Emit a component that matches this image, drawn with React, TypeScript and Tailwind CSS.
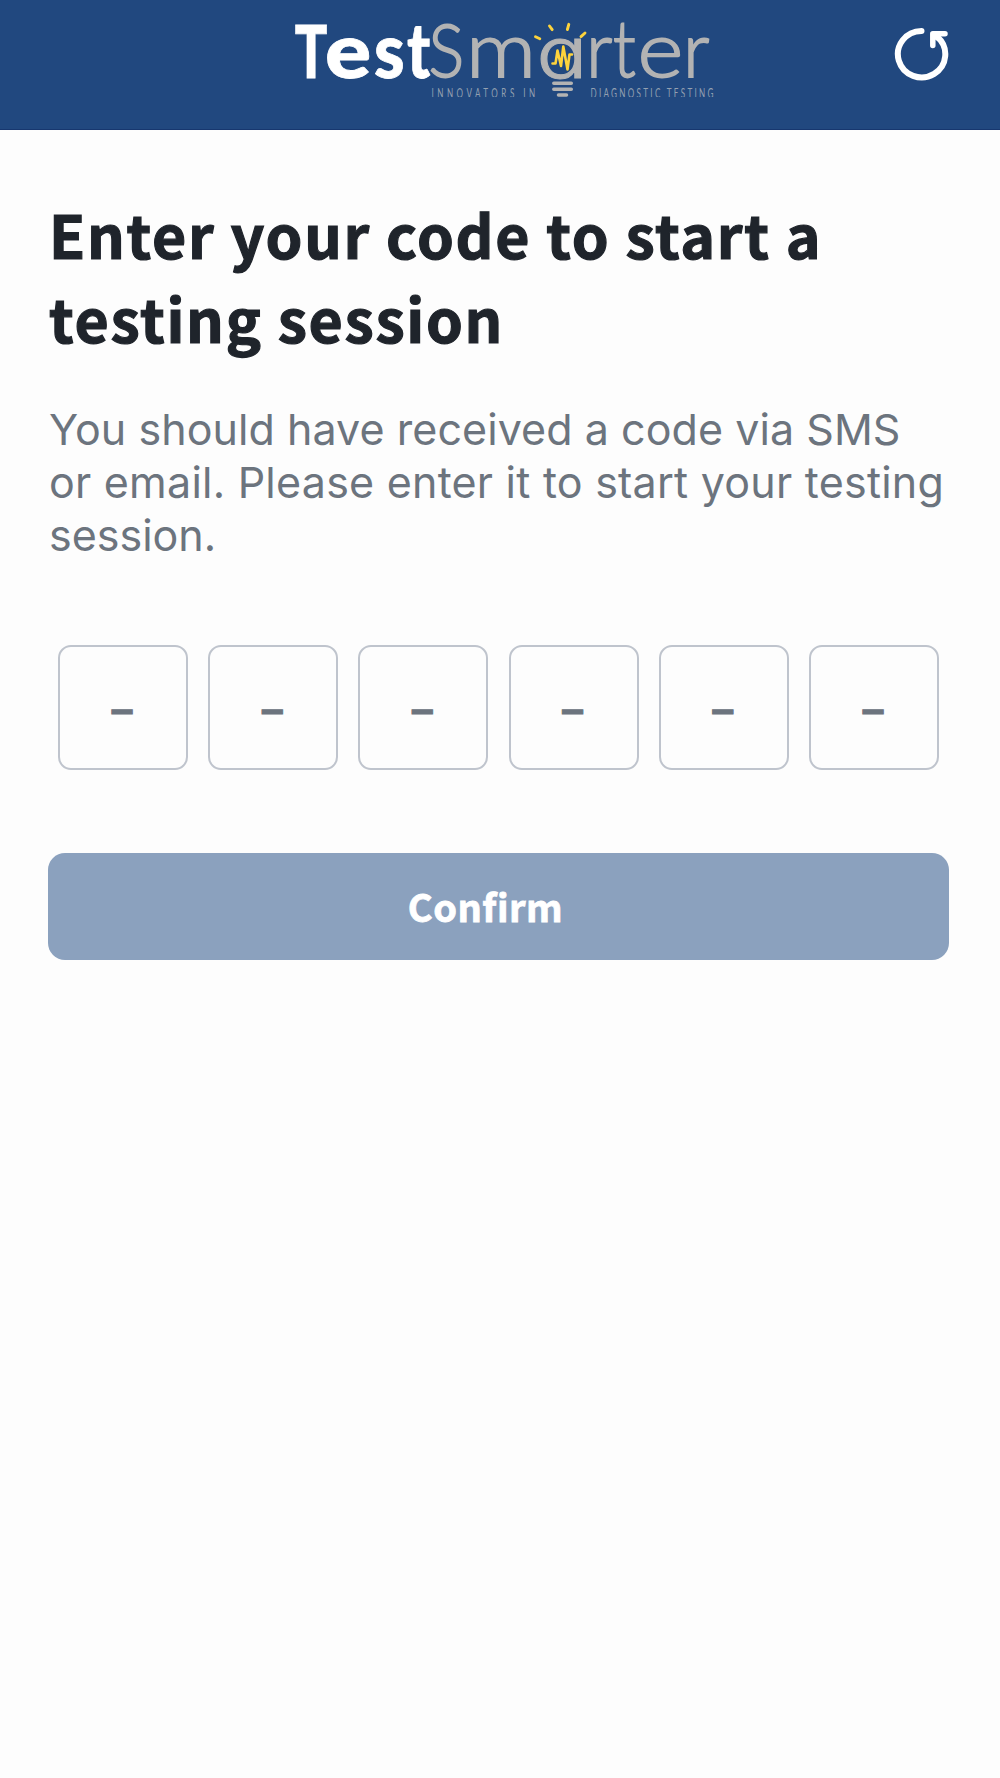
import {useState} from 'react';

const CODE_LENGTH = 6;

const boldLetters = [
  {char: 'T', x: 294.8, scale: 0.74, size: 73},
  {char: 'e', x: 325, scale: 1.12, size: 77},
  {char: 's', x: 374, scale: 0.9, size: 77},
  {char: 't', x: 407, scale: 0.8, size: 77},
];

const lightLetters = [
  {char: 'S', x: 428.5, scale: 0.92, size: 72.5},
  {char: 'm', x: 466, scale: 1.13, size: 77},
  {char: 'r', x: 586, scale: 0.97, size: 77},
  {char: 't', x: 613, scale: 0.85, size: 78},
  {char: 'e', x: 637.5, scale: 1.14, size: 77},
  {char: 'r', x: 683, scale: 0.97, size: 77},
];

function Logo() {
  return (
    <svg
      viewBox="290 0 430 96.5"
      className="h-[96.5px] w-[430px] overflow-hidden"
      role="img"
      aria-label="TestSmarter"
    >
      {/* Word mark */}
      <g fill="#ffffff" stroke="#ffffff" strokeWidth="0.8" fontWeight="900" className="font-['Lato',sans-serif]">
        {boldLetters.map(({char, x, scale, size}) => (
          <text key={x} transform={`translate(${x} 77.5) scale(${scale} 1)`} fontSize={size}>
            {char}
          </text>
        ))}
      </g>
      <g fill="#b3b3b3" stroke="#b3b3b3" strokeWidth="1.8" fontWeight="300" className="font-['Lato',sans-serif]">
        {lightLetters.map(({char, x, scale, size}) => (
          <text key={x} transform={`translate(${x} 77) scale(${scale} 1)`} fontSize={size}>
            {char}
          </text>
        ))}
      </g>
      <text
        x="536.5"
        y="77.5"
        fill="#b3b3b3"
        stroke="#b3b3b3"
        strokeWidth="1"
        fontSize="71"
        fontWeight="300"
        textLength="51"
        lengthAdjust="spacingAndGlyphs"
        className="font-['Inter',sans-serif] [font-feature-settings:'cv11']"
      >
        a
      </text>

      {/* Light bulb */}
      <g fill="none" stroke="#fdd33c" strokeLinecap="round" strokeLinejoin="round">
        <path
          d="M552.500 63.500h3l2-13 3.500 15.500 2.300-19.500 4.200 23 2-15h2.500"
          strokeWidth="2.600"
        />
        <path d="M535.500 36.700l4.300 2M549.500 26l2.700 3.700M568.800 24.300l-1.400 5.200M585 33l-4 3.600" strokeWidth="2.900" />
      </g>
      <path d="M553.800 83.200h17.500M553.800 89.300h17.500M558.500 95h8" stroke="#b3b3b3" strokeWidth="3.500" strokeLinecap="round" />

      {/* Tagline */}
      <g fill="#93a0b1" fontSize="13.500" className="font-['Lato',sans-serif]">
        <text transform="translate(431.500 97.800) scale(.6 1)" textLength="173" lengthAdjust="spacing">INNOVATORS IN</text>
        <text transform="translate(590.500 97.800) scale(.6 1)" textLength="205" lengthAdjust="spacing">DIAGNOSTIC TESTING</text>
      </g>
    </svg>
  );
}

function ReloadIcon() {
  return (
    <svg viewBox="0 0 60 60" className="h-[60px] w-[60px]" fill="none" stroke="#ffffff" strokeLinecap="round" strokeLinejoin="round">
      <path d="M31.500 8A23.700 23.200 0 1 0 47.500 14" strokeWidth="6" />
      <path d="M42.800 22.500V10.700H55M43 11l6 5" strokeWidth="5.500" />
    </svg>
  );
}

export default function App() {
  const [code] = useState<string[]>(Array(CODE_LENGTH).fill(''));

  return (
    <main className="min-h-screen bg-[#fdfdfd]">
      {/* Header */}
      <header className="flex h-[130px] items-start justify-between border-b border-[#17376f] bg-[#21487f] pr-[50px] pl-[290px]">
        <Logo />
        <button aria-label="Reload" className="mt-[23px]">
          <ReloadIcon />
        </button>
      </header>

      <section className="pt-[62px] pr-[51px] pl-12">
        <h1 className="pl-px text-[59px] leading-[83.5px] font-bold tracking-[1.7px] text-[#1f242b] [-webkit-text-stroke:1.2px_#1f242b] font-['Noto_Sans_CJK_SC',sans-serif]">
          Enter your code to start a<br />testing session
        </h1>
        <p className="mt-11 pl-px text-[43px] leading-[53.2px] whitespace-nowrap text-[#6c747e] font-['Inter',sans-serif]">
          <span className="tracking-[0.06px]">You should have received a code via SMS</span><br />
          <span className="tracking-[0.24px]">or email. Please enter it to start your testing</span><br />
          session.
        </p>

        {/* Code fields */}
        <div className="mt-[82px] flex justify-between pr-2.5 pl-2.5">
          {code.map((digit, index) => (
            <div
              key={index}
              className="flex h-[125px] w-[130px] items-center justify-center rounded-[13px] border-2 border-[#bfc4cd] pr-0.5 pb-[3px] text-[46px] font-bold text-[#6c747e] [-webkit-text-stroke:1px_#6c747e] font-['Noto_Sans_CJK_SC',sans-serif]"
            >
              {digit || '–'}
            </div>
          ))}
        </div>

        <button
          disabled
          className="mt-[83px] flex h-[107px] w-full items-center justify-center rounded-[17px] bg-[#8ba1be] pr-[26px] pb-0.5 text-[38px] font-bold tracking-[0.5px] text-white [-webkit-text-stroke:0.8px_#ffffff] font-['Noto_Sans_CJK_SC',sans-serif]"
        >
          Confirm
        </button>
      </section>
    </main>
  );
}
